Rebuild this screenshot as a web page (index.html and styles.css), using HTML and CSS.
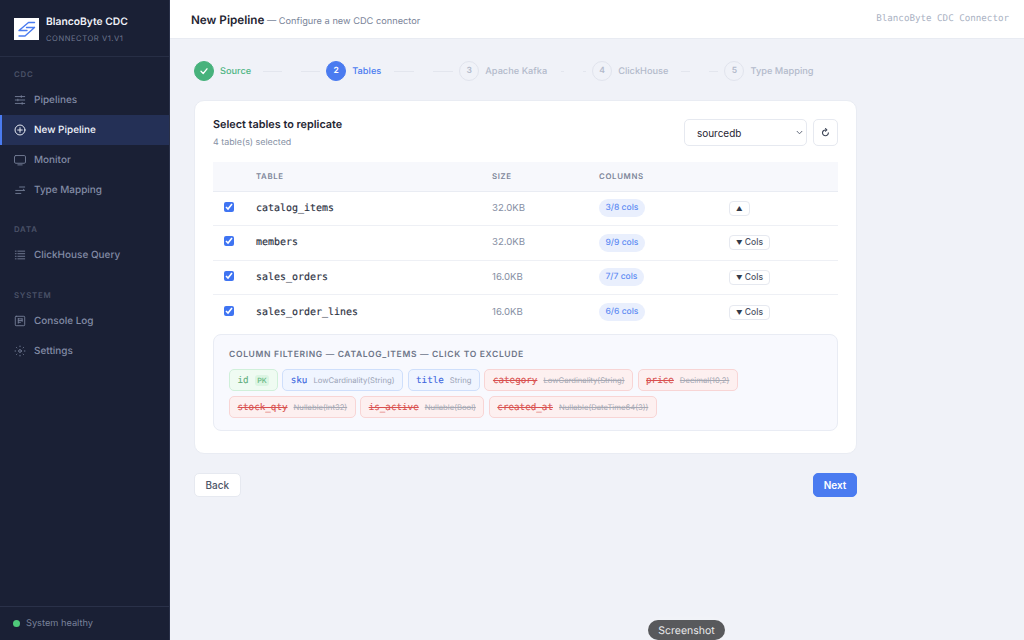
FILE: index.html
```html
<!DOCTYPE html>
<html lang="en">
<head>
<meta charset="utf-8">
<title>New Pipeline</title>
<link rel="stylesheet" href="styles.css">
</head>
<body>
<div class="app">
  <aside class="sidebar">
    <div class="brand">
      <div class="logo">
        <svg viewBox="0 0 25 22" width="25" height="22" fill="none" stroke="#4a7bf0" stroke-width="1.400" stroke-linejoin="round" stroke-linecap="round"><path d="M20.500 4.500H14.500L5 12.500H13"/><path d="M20.500 9.500H12.500M20.500 9.500 11 18H5"/></svg>
      </div>
      <div class="brand-text">
        <div class="brand-name">BlancoByte CDC</div>
        <div class="brand-sub">CONNECTOR V1.V1</div>
      </div>
    </div>
    <nav class="nav">
      <div class="nav-label">CDC</div>
      <a class="nav-item"><svg class="ico" viewBox="0 0 14 14"><path d="M1.500 3h11M1.500 7h11M1.500 11h11"/><path d="M8.500 2v2M4.500 6v2M9.500 10v2"/></svg>Pipelines</a>
      <a class="nav-item active"><svg class="ico" viewBox="0 0 14 14"><circle cx="7" cy="7" r="5.800"/><path d="M7 4.300v5.400M4.300 7h5.400"/></svg>New Pipeline</a>
      <a class="nav-item"><svg class="ico" viewBox="0 0 14 14"><rect x=".6" y="1.800" width="12.800" height="9" rx="1.500"/><path d="M4.500 12.700h5"/></svg>Monitor</a>
      <a class="nav-item"><svg class="ico" viewBox="0 0 14 14"><path d="M6.500 3.500h6"/><path d="M2 7.500h10.500L10.800 6"/><path d="M2 11h6"/></svg>Type Mapping</a>
      <div class="nav-label gap">DATA</div>
      <a class="nav-item"><svg class="ico" viewBox="0 0 14 14"><path d="M4.500 2.500h8M4.500 5.500h8M4.500 8.500h8M4.500 11.500h8"/><path d="M1.500 2.500h1M1.500 5.500h1M1.500 8.500h1M1.500 11.500h1"/></svg>ClickHouse Query</a>
      <div class="nav-label gap">SYSTEM</div>
      <a class="nav-item"><svg class="ico" viewBox="0 0 14 14"><rect x="1.500" y="1.500" width="11" height="11" rx="1"/><path d="M5 4.500h4.500M5 6.500h4.500M5 8.500h2.500M5 4v5.500M9.500 4.500v3"/></svg>Console Log</a>
      <a class="nav-item"><svg class="ico" viewBox="0 0 14 14"><circle cx="7" cy="7" r="1.600"/><path d="M7 1.200v.8M7 12v.8M1.200 7h.8M12 7h.8M2.900 2.900l.5.5M10.600 10.600l.5.5M2.900 11.100l.5-.5M10.600 3.400l.5-.5"/></svg>Settings</a>
    </nav>
    <div class="side-foot"><span class="dot"></span>System healthy</div>
  </aside>

  <main class="main">
    <header class="topbar">
      <div class="top-title"><strong>New Pipeline</strong><span> — Configure a new CDC connector</span></div>
      <div class="top-right">BlancoByte CDC Connector</div>
    </header>

    <div class="content">
      <div class="stepper">
        <div class="step done"><span class="num"><svg viewBox="0 0 10 10" width="10" height="10" fill="none" stroke="#fff" stroke-width="1.300" stroke-linecap="round" stroke-linejoin="round"><path d="M2 5.300 4.200 7.500 8 2.800"/></svg></span>Source</div>
        <div class="conn c1"><i></i><i></i></div>
        <div class="step current"><span class="num">2</span>Tables</div>
        <div class="conn c2"><i></i><i></i></div>
        <div class="step"><span class="num">3</span>Apache Kafka</div>
        <div class="conn c3"><i></i><i></i></div>
        <div class="step"><span class="num">4</span>ClickHouse</div>
        <div class="conn c4"><i></i><i></i></div>
        <div class="step"><span class="num">5</span>Type Mapping</div>
      </div>

      <section class="card">
        <div class="card-head">
          <div>
            <h2>Select tables to replicate</h2>
            <p>4 table(s) selected</p>
          </div>
          <div class="tools">
            <select class="db"><option>sourcedb</option></select>
            <button class="refresh" type="button"><svg viewBox="0 0 12 12" width="9" height="9" fill="none" stroke="#3c4456" stroke-width="1.500" stroke-linecap="round"><path d="M9.800 6.500A3.900 3.900 0 1 1 6 2.600"/><path d="M6 .8 7.800 2.600 6 4.200" stroke-linejoin="round"/></svg></button>
          </div>
        </div>

        <table class="tbl">
          <colgroup><col class="w1"><col class="w2"><col class="w3"><col class="w4"><col class="w5"></colgroup>
          <thead><tr><th></th><th>TABLE</th><th>SIZE</th><th>COLUMNS</th><th></th></tr></thead>
          <tbody>
            <tr><td><input type="checkbox" checked></td><td class="name">catalog_items</td><td class="size">32.0KB</td><td><span class="pill">3/8 cols</span></td><td><button class="cols" type="button"><b>▲</b></button></td></tr>
            <tr><td><input type="checkbox" checked></td><td class="name">members</td><td class="size">32.0KB</td><td><span class="pill">9/9 cols</span></td><td><button class="cols" type="button"><b>▼</b> Cols</button></td></tr>
            <tr><td><input type="checkbox" checked></td><td class="name">sales_orders</td><td class="size">16.0KB</td><td><span class="pill">7/7 cols</span></td><td><button class="cols" type="button"><b>▼</b> Cols</button></td></tr>
            <tr><td><input type="checkbox" checked></td><td class="name">sales_order_lines</td><td class="size">16.0KB</td><td><span class="pill">6/6 cols</span></td><td><button class="cols" type="button"><b>▼</b> Cols</button></td></tr>
          </tbody>
        </table>

        <div class="filter">
          <div class="filter-title">COLUMN FILTERING — CATALOG_ITEMS — CLICK TO EXCLUDE</div>
          <div class="chips">
            <span class="chip pk"><code>id</code><em>PK</em></span>
            <span class="chip on"><code>sku</code><small>LowCardinality(String)</small></span>
            <span class="chip on"><code>title</code><small>String</small></span>
            <span class="chip off"><code>category</code><small>LowCardinality(String)</small></span>
            <span class="chip off"><code>price</code><small>Decimal(10,2)</small></span>
            <span class="chip off"><code>stock_qty</code><small>Nullable(Int32)</small></span>
            <span class="chip off"><code>is_active</code><small>Nullable(Bool)</small></span>
            <span class="chip off"><code>created_at</code><small>Nullable(DateTime64(3))</small></span>
          </div>
        </div>
      </section>

      <div class="actions">
        <button class="btn" type="button">Back</button>
        <button class="btn primary" type="button">Next</button>
      </div>
    </div>
  </main>
</div>
<div class="shot">Screenshot</div>
</body>
</html>
```

FILE: styles.css
```css
* { box-sizing: border-box; }
html, body { margin: 0; height: 100%; }
body { font-family: Inter, "Liberation Sans", sans-serif; background: #f0f2f8; color: #1f2533; overflow: hidden; text-rendering: geometricPrecision; }
.app { display: flex; height: 640px; }

.sidebar { width: 170px; flex: none; background: #1a2035; border-right: 1px solid #2a3149; display: flex; flex-direction: column; }
.brand { height: 57px; display: flex; align-items: center; gap: 7px; padding: 2px 14px 0; border-bottom: 1px solid #272e45; }
.logo { width: 25px; height: 22px; background: #fff; display: flex; flex: none; }
.brand-text { margin-top: 2px; }
.brand-name { font-size: 10.300px; font-weight: 600; color: #f0f2f8; line-height: 13px; }
.brand-sub { font-size: 7.600px; letter-spacing: .55px; color: #6f7890; line-height: 11px; margin-top: 4px; }
.nav { flex: 1; padding-top: 11px; }
.nav-label { font-size: 7.800px; font-weight: 600; letter-spacing: .8px; color: #4a5268; padding-left: 14px; height: 12px; line-height: 12px; margin-bottom: 4.500px; }
.nav-label.gap { margin-top: 18.500px; margin-bottom: 5px; }
.nav-item { height: 30px; display: flex; align-items: center; gap: 8px; padding-left: 14px; font-size: 9.960px; font-weight: 500; color: #838ca6; }
.nav-item.active { background: #243056; color: #f0f3fb; box-shadow: inset 2px 0 0 #4a7bf0; }
.ico { width: 12px; height: 12px; flex: none; fill: none; stroke: currentColor; stroke-width: 1.100; stroke-linecap: round; stroke-linejoin: round; opacity: .85; }
.nav-item.active .ico { opacity: 1; }
.side-foot { height: 34px; border-top: 1px solid #2a3149; display: flex; align-items: center; gap: 6px; padding-left: 13px; font-size: 9.240px; color: #79829b; }
.dot { width: 7px; height: 7px; border-radius: 50%; background: #4fc97a; flex: none; }

.main { flex: 1; min-width: 0; display: flex; flex-direction: column; }
.topbar { height: 39px; flex: none; background: #fff; border-bottom: 1px solid #e8ebf2; display: flex; align-items: center; justify-content: space-between; padding: 0 15px 3px 21px; }
.top-title strong { font-size: 11.700px; font-weight: 600; color: #1f2533; }
.top-title span { font-size: 9.240px; color: #7a8499; }
.top-right { font-family: "DejaVu Sans Mono", "Liberation Mono", monospace; font-size: 9.200px; color: #aab2c3; margin-top: 2px; }

.content { padding: 22px 167px 0 24px; }
.stepper { display: flex; align-items: center; height: 20px; margin-bottom: 19px; }
.step { display: flex; align-items: center; gap: 6px; font-size: 9.240px; font-weight: 500; color: #b3bacb; white-space: nowrap; }
.num { width: 20px; height: 20px; border-radius: 50%; border: 1px solid #e1e4ed; display: flex; align-items: center; justify-content: center; font-size: 8.500px; font-weight: 600; color: #b3bacb; flex: none; }
.step.done { color: #4fb584; }
.step.done .num { background: #47b27c; border-color: #47b27c; }
.step.current { color: #4a7bf0; }
.step.current .num { background: #4a7bf0; border-color: #4a7bf0; color: #fff; }
.conn { display: flex; justify-content: space-between; }
.conn i { display: block; height: 1px; background: #e3e6ee; }
.c1 { width: 57px; margin: 0 6px 0 12px; }
.c1 i { width: 19px; }
.c2 { width: 59px; margin: 0 6px 0 13px; }
.c2 i { width: 20px; }
.c3 { width: 25px; margin: 0 6px 0 14px; }
.c3 i { width: 3px; }
.c4 { width: 37px; margin: 0 6px 0 13px; }
.c4 i { width: 9px; }

.card { width: 663px; height: 354px; background: #fff; border: 1px solid #e9ecf3; border-radius: 10px; padding: 18px 18px 0; }
.card-head { display: flex; justify-content: space-between; align-items: flex-start; height: 43px; }
.card-head h2 { margin: -1px 0 0; font-size: 10.850px; font-weight: 600; color: #1f2533; line-height: 13px; }
.card-head p { margin: 6px 0 0; font-size: 8.890px; line-height: 12px; color: #868fa4; }
.tools { display: flex; gap: 6px; }
.db { width: 123px; height: 27px; border: 1px solid #e6e9f0; border-radius: 5px; font-family: Inter, sans-serif; font-size: 9.960px; color: #1f2533; padding-left: 12px; appearance: none; background: #fff url("data:image/svg+xml,%3Csvg xmlns='http://www.w3.org/2000/svg' width='7' height='5' fill='none' stroke='%23555c6e' stroke-width='.9'%3E%3Cpath d='M.8 1 3.500 3.800 6.200 1'/%3E%3C/svg%3E") no-repeat right 3.500px center; }
.refresh { width: 25px; height: 27px; border: 1px solid #e6e9f0; border-radius: 5px; background: #fff; padding: 0; display: flex; align-items: center; justify-content: center; }

.tbl { width: 625px; table-layout: fixed; border-collapse: collapse; }
.w1 { width: 32px; } .w2 { width: 236px; } .w3 { width: 107px; } .w4 { width: 130px; } .w5 { width: 120px; }
.tbl th { height: 29px; background: #f7f8fc; text-align: left; font-size: 7.820px; font-weight: 600; letter-spacing: .65px; color: #7d8699; padding: 0 11px; border-bottom: 1px solid #e9ecf3; }
.tbl td { height: 34.500px; padding: 0 11px; border-bottom: 1px solid #eef0f5; vertical-align: middle; }
.tbl tbody tr:last-child td { border-bottom: 0; }
.tbl input { width: 10px; height: 10px; margin: 0 0 3px; accent-color: #3f74f2; display: block; }
.name { font-family: "DejaVu Sans Mono", "Liberation Mono", monospace; font-size: 9.960px; color: #2a3040; -webkit-text-stroke: .15px #2a3040; }
.size { font-size: 9.600px; color: #868fa4; }
.pill { display: block; width: fit-content; height: 18px; line-height: 18px; padding: 0 6.500px; border-radius: 9px; background: #e9effd; color: #5f8cf3; font-size: 8.530px; font-weight: 500; }
.cols { display: block; height: 15px; padding: 0 6px; border: 1px solid #e6e9f0; border-radius: 4px; background: #fff; font-family: Inter, sans-serif; font-size: 8.530px; line-height: 12px; font-weight: 500; color: #4c5466; }
.cols b { font-size: 6.500px; color: #333a4a; font-weight: 400; }

.filter { margin-top: 5px; height: 97px; background: #f8f9fe; border: 1px solid #e9ecf4; border-radius: 8px; padding: 15px 15px 0; }
.filter-title { font-size: 8.530px; font-weight: 600; letter-spacing: .66px; color: #6e7689; line-height: 11px; margin-bottom: 8px; }
.chips { display: flex; flex-wrap: wrap; gap: 5px 4.500px; }
.chip { height: 22px; display: inline-flex; align-items: center; gap: 6px; padding: 0 7.500px; border: 1px solid; border-radius: 5px; white-space: nowrap; }
.chip code { font-family: "DejaVu Sans Mono", "Liberation Mono", monospace; font-size: 9.240px; -webkit-text-stroke: .1px currentColor; }
.chip small { font-size: 7.700px; color: #9aa3b6; }
.chip em { font-style: normal; font-size: 7.200px; font-weight: 500; background: #dcf5e3; color: #63b57f; padding: 1px 2.500px; border-radius: 3px; }
.chip.pk { background: #effbf2; border-color: #d0f0da; }
.chip.pk code { color: #5fae7b; }
.chip.on { background: #f0f5ff; border-color: #cfdffb; }
.chip.on code { color: #3d67e0; }
.chip.off { background: #fdf0f0; border-color: #f8d5d5; }
.chip.off code { color: #d9504f; text-decoration: line-through; }
.chip.off small { text-decoration: line-through; color: #a7a9b4; }

.actions { width: 663px; display: flex; justify-content: space-between; margin-top: 18.500px; }
.btn { height: 24px; padding: 0 10.500px; border: 1px solid #e6e9f0; border-radius: 5px; background: #fff; font-family: Inter, sans-serif; font-size: 9.960px; font-weight: 500; color: #4c5466; }
.btn.primary { background: #4a7bf0; border-color: #4a7bf0; color: #fff; font-weight: 600; width: 44px; padding: 0; }

.shot { position: absolute; left: 648px; top: 620px; width: 77px; height: 20px; border-radius: 10px; background: #58595c; color: #e8e8ea; font-size: 10.500px; display: flex; align-items: center; justify-content: center; box-shadow: 0 0 12px rgba(255,255,255,.25); }
```
